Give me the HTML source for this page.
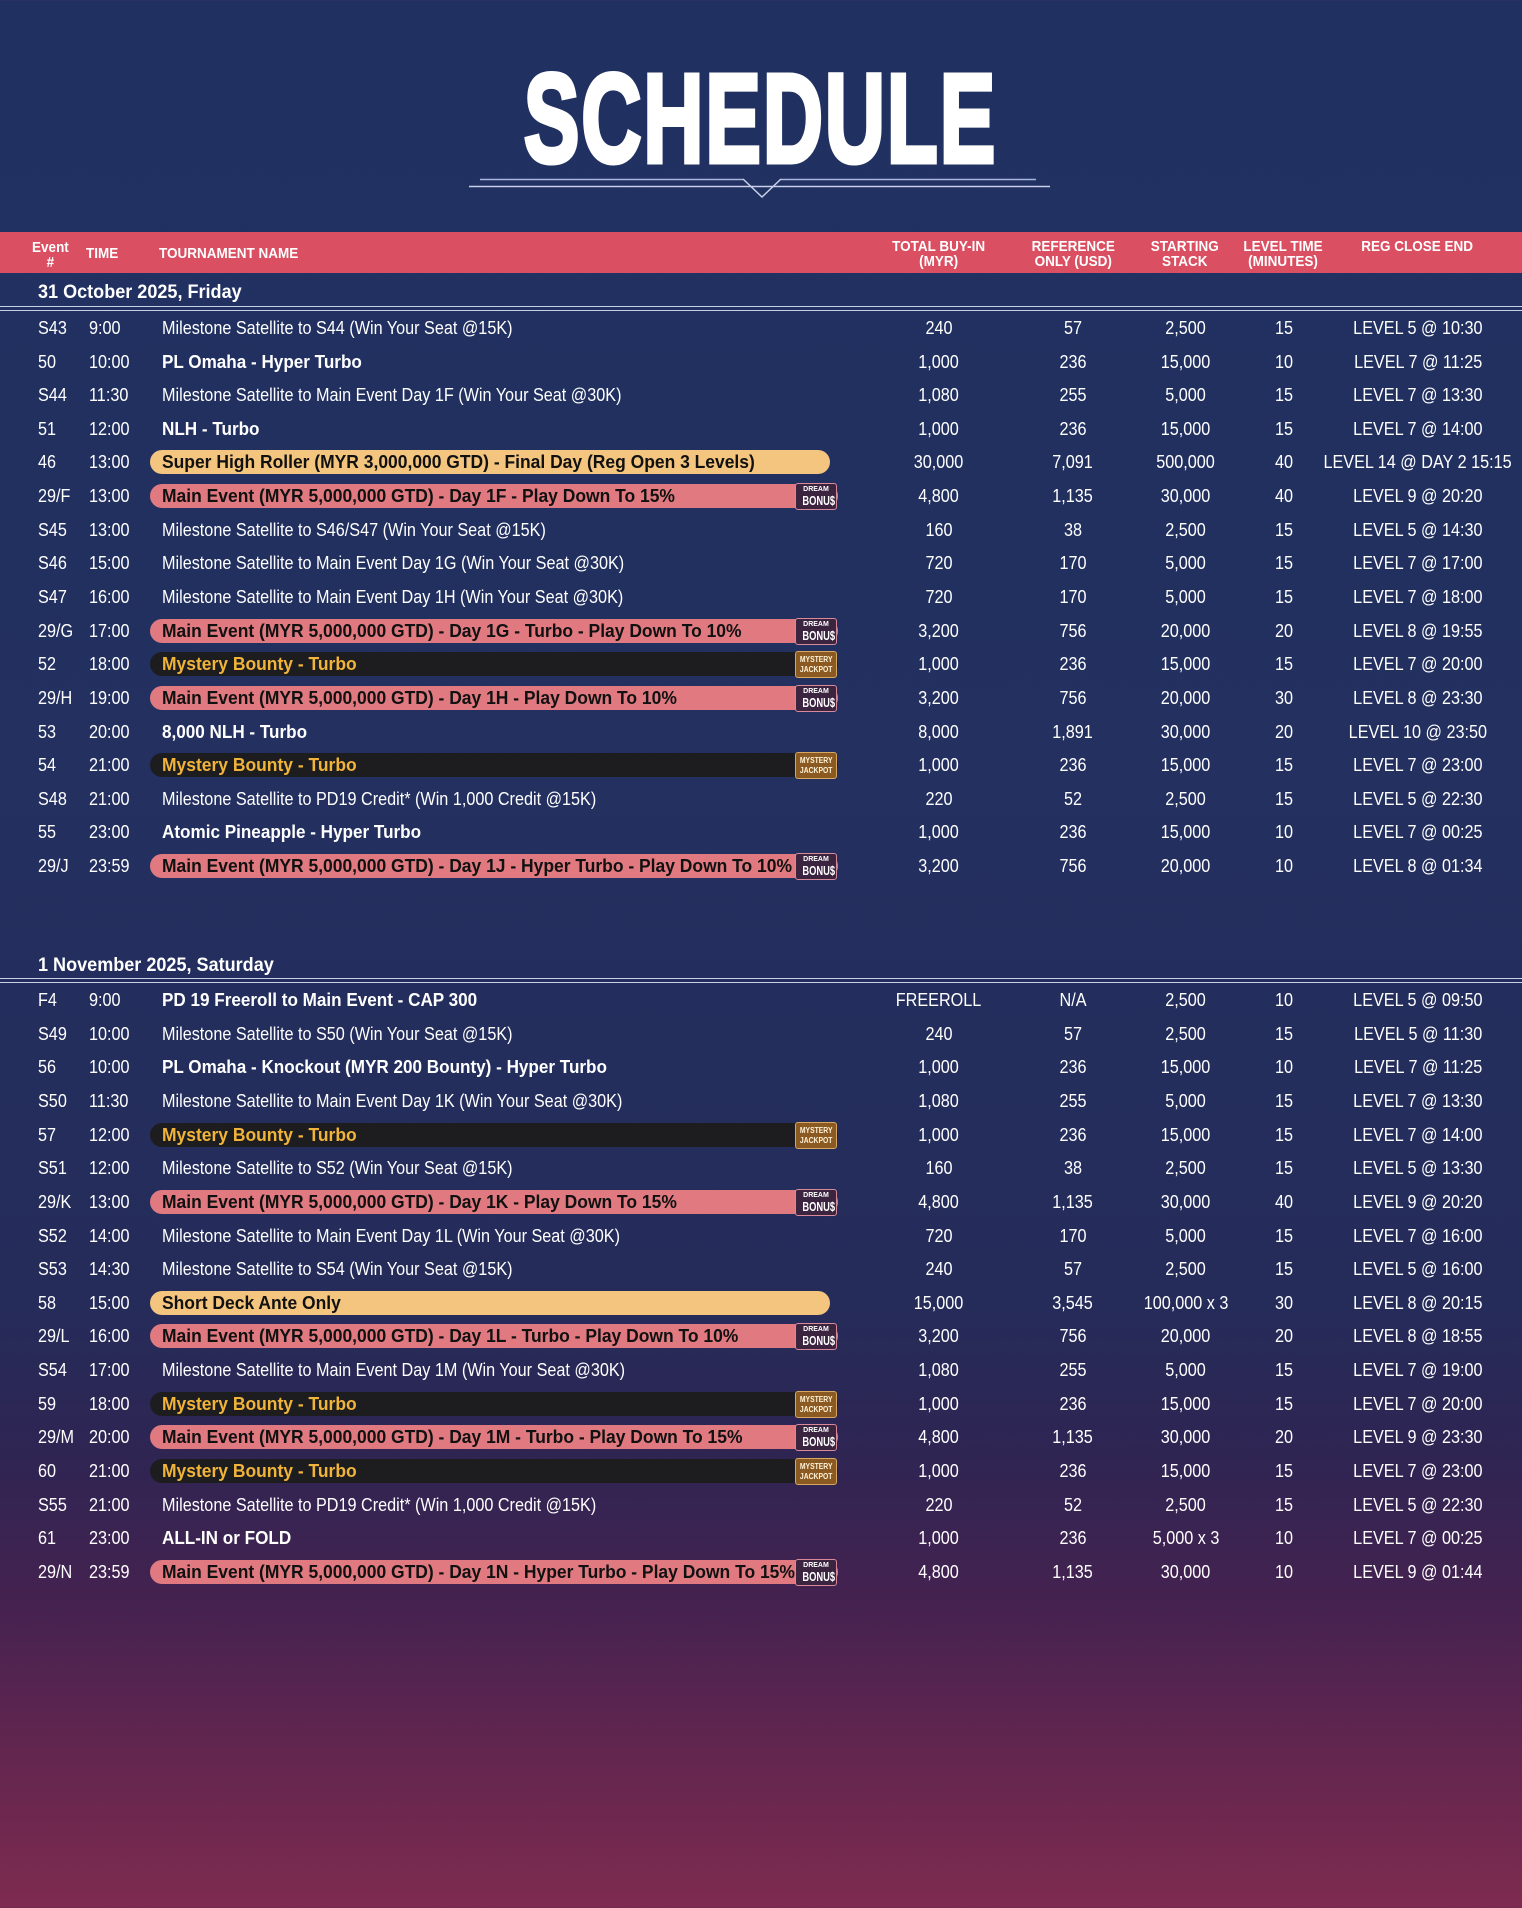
<!DOCTYPE html>
<html><head><meta charset="utf-8"><style>
*{margin:0;padding:0;box-sizing:border-box}
body{width:1522px;height:1908px;position:relative;overflow:hidden;font-family:"Liberation Sans",sans-serif;color:#fff;
background:linear-gradient(180deg,#203161 0%,#233060 40%,#252c5a 68%,#2e2553 76%,#452250 84%,#63264f 92%,#7e2b4f 100%)}
.title{position:absolute;left:0;width:1522px;top:44px;text-align:center;font-size:126px;font-weight:bold;line-height:150px}
.title span{display:inline-block;transform:scaleX(.66);letter-spacing:3px;-webkit-text-stroke:5px #fff}
.hb{position:absolute;left:0;top:232px;width:1522px;height:41px;background:#da4f61}
.h{position:absolute;font-weight:bold;font-size:15px;line-height:15px;text-align:center}
.h span{display:inline-block;transform:scaleX(.9)}
.date{position:absolute;left:38px;font-weight:bold;font-size:19px}
.date span{display:inline-block;transform:scaleX(.95);transform-origin:left}
.ln{position:absolute;left:0;width:1522px;height:1px;background:#c9d0e6}
.r{position:absolute;left:0;width:1522px;height:34px;line-height:34px;font-size:18px}
.r div{position:absolute;top:0;white-space:nowrap}
.r span{display:inline-block;transform:scaleX(.9);transform-origin:left}
.e{left:38px}.tm{left:89px}.n{left:162px}
.c{width:240px;margin-left:-120px;text-align:center}
.r .c span{transform-origin:center}
.b{font-weight:bold}
.r .b span{transform:scaleX(.95)}
.r div.p{left:150px;top:5px;height:24px;border-radius:12px;width:680px}
.gold{background:#f4c57f}.pink{background:#e07a80}.dark{background:#1d1d20}
.tb{color:#111;font-weight:bold}.ty{color:#f1b43a;font-weight:bold}
.r .tb span,.r .ty span{transform:scaleX(.97)}
.r div.bd{left:795px;top:4px;width:42px;height:27px;border-radius:3px;text-align:center;font-weight:bold;overflow:hidden}
.r div.bd span{transform-origin:center}
.db{background:#3a2440;border:1.5px solid #d98a9a}
.db i{display:block;font-style:normal;font-size:7px;line-height:8px;margin-top:2px}
.db b{display:block;font-size:13px;line-height:13px}
.db b span{transform:scaleX(.72)!important}
.mj{background:#8a5a22;border:1.5px solid #d9a860;color:#fff3d8}
.mj i{display:block;font-style:normal;font-size:8px;line-height:10px;margin-top:3px}
.mj i span{transform:scaleX(.85)!important}
</style></head><body>
<div class="title"><span>SCHEDULE</span></div>
<svg style="position:absolute;left:0;top:0" width="1522" height="220">
<line x1="480" y1="179.5" x2="743" y2="179.5" stroke="#a9b6dc" stroke-width="1.5"/>
<line x1="781" y1="179.5" x2="1036" y2="179.5" stroke="#a9b6dc" stroke-width="1.5"/>
<line x1="469" y1="186.5" x2="1050" y2="186.5" stroke="#c8d0ea" stroke-width="1.5"/>
<polyline points="743,179 762,197 781,179" fill="none" stroke="#c8d0ea" stroke-width="1.5"/>
</svg>
<div class="hb"></div>
<div class="h" style="left:20px;width:60px;top:240px"><span>Event<br>#</span></div>
<div class="h" style="left:86px;top:246px"><span style="transform-origin:left">TIME</span></div>
<div class="h" style="left:159px;top:246px"><span style="transform-origin:left">TOURNAMENT NAME</span></div>
<div class="h" style="left:859px;width:160px;top:239px"><span>TOTAL BUY-IN<br>(MYR)</span></div>
<div class="h" style="left:993px;width:160px;top:239px"><span>REFERENCE<br>ONLY (USD)</span></div>
<div class="h" style="left:1125px;width:120px;top:239px"><span>STARTING<br>STACK</span></div>
<div class="h" style="left:1223px;width:120px;top:239px"><span>LEVEL TIME<br>(MINUTES)</span></div>
<div class="h" style="left:1337px;width:160px;top:239px"><span>REG CLOSE END</span></div>

<div class="date" style="top:282px"><span>31 October 2025, Friday</span></div>
<div class="ln" style="top:306px"></div><div class="ln" style="top:310px"></div>

<div class="r" style="top:311px"><div class="e"><span>S43</span></div><div class="tm"><span>9:00</span></div><div class="n"><span>Milestone Satellite to S44 (Win Your Seat @15K)</span></div><div class="c" style="left:939px"><span>240</span></div><div class="c" style="left:1073px"><span>57</span></div><div class="c" style="left:1186px"><span>2,500</span></div><div class="c" style="left:1284px"><span>15</span></div><div class="c" style="left:1418px"><span>LEVEL 5 @ 10:30</span></div></div>
<div class="r" style="top:345px"><div class="e"><span>50</span></div><div class="tm"><span>10:00</span></div><div class="n b"><span>PL Omaha - Hyper Turbo</span></div><div class="c" style="left:939px"><span>1,000</span></div><div class="c" style="left:1073px"><span>236</span></div><div class="c" style="left:1186px"><span>15,000</span></div><div class="c" style="left:1284px"><span>10</span></div><div class="c" style="left:1418px"><span>LEVEL 7 @ 11:25</span></div></div>
<div class="r" style="top:378px"><div class="e"><span>S44</span></div><div class="tm"><span>11:30</span></div><div class="n"><span>Milestone Satellite to Main Event Day 1F (Win Your Seat @30K)</span></div><div class="c" style="left:939px"><span>1,080</span></div><div class="c" style="left:1073px"><span>255</span></div><div class="c" style="left:1186px"><span>5,000</span></div><div class="c" style="left:1284px"><span>15</span></div><div class="c" style="left:1418px"><span>LEVEL 7 @ 13:30</span></div></div>
<div class="r" style="top:412px"><div class="e"><span>51</span></div><div class="tm"><span>12:00</span></div><div class="n b"><span>NLH - Turbo</span></div><div class="c" style="left:939px"><span>1,000</span></div><div class="c" style="left:1073px"><span>236</span></div><div class="c" style="left:1186px"><span>15,000</span></div><div class="c" style="left:1284px"><span>15</span></div><div class="c" style="left:1418px"><span>LEVEL 7 @ 14:00</span></div></div>
<div class="r" style="top:445px"><div class="p gold"></div><div class="e"><span>46</span></div><div class="tm"><span>13:00</span></div><div class="n tb"><span>Super High Roller (MYR 3,000,000 GTD) - Final Day (Reg Open 3 Levels)</span></div><div class="c" style="left:939px"><span>30,000</span></div><div class="c" style="left:1073px"><span>7,091</span></div><div class="c" style="left:1186px"><span>500,000</span></div><div class="c" style="left:1284px"><span>40</span></div><div class="c" style="left:1418px"><span>LEVEL 14 @ DAY 2 15:15</span></div></div>
<div class="r" style="top:479px"><div class="p pink" style="width:688px"></div><div class="e"><span>29/F</span></div><div class="tm"><span>13:00</span></div><div class="n tb"><span>Main Event (MYR 5,000,000 GTD) - Day 1F - Play Down To 15%</span></div><div class="bd db"><i>DREAM</i><b><span>BONU$</span></b></div><div class="c" style="left:939px"><span>4,800</span></div><div class="c" style="left:1073px"><span>1,135</span></div><div class="c" style="left:1186px"><span>30,000</span></div><div class="c" style="left:1284px"><span>40</span></div><div class="c" style="left:1418px"><span>LEVEL 9 @ 20:20</span></div></div>
<div class="r" style="top:513px"><div class="e"><span>S45</span></div><div class="tm"><span>13:00</span></div><div class="n"><span>Milestone Satellite to S46/S47 (Win Your Seat @15K)</span></div><div class="c" style="left:939px"><span>160</span></div><div class="c" style="left:1073px"><span>38</span></div><div class="c" style="left:1186px"><span>2,500</span></div><div class="c" style="left:1284px"><span>15</span></div><div class="c" style="left:1418px"><span>LEVEL 5 @ 14:30</span></div></div>
<div class="r" style="top:546px"><div class="e"><span>S46</span></div><div class="tm"><span>15:00</span></div><div class="n"><span>Milestone Satellite to Main Event Day 1G (Win Your Seat @30K)</span></div><div class="c" style="left:939px"><span>720</span></div><div class="c" style="left:1073px"><span>170</span></div><div class="c" style="left:1186px"><span>5,000</span></div><div class="c" style="left:1284px"><span>15</span></div><div class="c" style="left:1418px"><span>LEVEL 7 @ 17:00</span></div></div>
<div class="r" style="top:580px"><div class="e"><span>S47</span></div><div class="tm"><span>16:00</span></div><div class="n"><span>Milestone Satellite to Main Event Day 1H (Win Your Seat @30K)</span></div><div class="c" style="left:939px"><span>720</span></div><div class="c" style="left:1073px"><span>170</span></div><div class="c" style="left:1186px"><span>5,000</span></div><div class="c" style="left:1284px"><span>15</span></div><div class="c" style="left:1418px"><span>LEVEL 7 @ 18:00</span></div></div>
<div class="r" style="top:614px"><div class="p pink" style="width:688px"></div><div class="e"><span>29/G</span></div><div class="tm"><span>17:00</span></div><div class="n tb"><span>Main Event (MYR 5,000,000 GTD) - Day 1G - Turbo - Play Down To 10%</span></div><div class="bd db"><i>DREAM</i><b><span>BONU$</span></b></div><div class="c" style="left:939px"><span>3,200</span></div><div class="c" style="left:1073px"><span>756</span></div><div class="c" style="left:1186px"><span>20,000</span></div><div class="c" style="left:1284px"><span>20</span></div><div class="c" style="left:1418px"><span>LEVEL 8 @ 19:55</span></div></div>
<div class="r" style="top:647px"><div class="p dark" style="width:688px"></div><div class="e"><span>52</span></div><div class="tm"><span>18:00</span></div><div class="n ty"><span>Mystery Bounty - Turbo</span></div><div class="bd mj"><i><span>MYSTERY<br>JACKPOT</span></i></div><div class="c" style="left:939px"><span>1,000</span></div><div class="c" style="left:1073px"><span>236</span></div><div class="c" style="left:1186px"><span>15,000</span></div><div class="c" style="left:1284px"><span>15</span></div><div class="c" style="left:1418px"><span>LEVEL 7 @ 20:00</span></div></div>
<div class="r" style="top:681px"><div class="p pink" style="width:688px"></div><div class="e"><span>29/H</span></div><div class="tm"><span>19:00</span></div><div class="n tb"><span>Main Event (MYR 5,000,000 GTD) - Day 1H - Play Down To 10%</span></div><div class="bd db"><i>DREAM</i><b><span>BONU$</span></b></div><div class="c" style="left:939px"><span>3,200</span></div><div class="c" style="left:1073px"><span>756</span></div><div class="c" style="left:1186px"><span>20,000</span></div><div class="c" style="left:1284px"><span>30</span></div><div class="c" style="left:1418px"><span>LEVEL 8 @ 23:30</span></div></div>
<div class="r" style="top:715px"><div class="e"><span>53</span></div><div class="tm"><span>20:00</span></div><div class="n b"><span>8,000 NLH - Turbo</span></div><div class="c" style="left:939px"><span>8,000</span></div><div class="c" style="left:1073px"><span>1,891</span></div><div class="c" style="left:1186px"><span>30,000</span></div><div class="c" style="left:1284px"><span>20</span></div><div class="c" style="left:1418px"><span>LEVEL 10 @ 23:50</span></div></div>
<div class="r" style="top:748px"><div class="p dark" style="width:688px"></div><div class="e"><span>54</span></div><div class="tm"><span>21:00</span></div><div class="n ty"><span>Mystery Bounty - Turbo</span></div><div class="bd mj"><i><span>MYSTERY<br>JACKPOT</span></i></div><div class="c" style="left:939px"><span>1,000</span></div><div class="c" style="left:1073px"><span>236</span></div><div class="c" style="left:1186px"><span>15,000</span></div><div class="c" style="left:1284px"><span>15</span></div><div class="c" style="left:1418px"><span>LEVEL 7 @ 23:00</span></div></div>
<div class="r" style="top:782px"><div class="e"><span>S48</span></div><div class="tm"><span>21:00</span></div><div class="n"><span>Milestone Satellite to PD19 Credit* (Win 1,000 Credit @15K)</span></div><div class="c" style="left:939px"><span>220</span></div><div class="c" style="left:1073px"><span>52</span></div><div class="c" style="left:1186px"><span>2,500</span></div><div class="c" style="left:1284px"><span>15</span></div><div class="c" style="left:1418px"><span>LEVEL 5 @ 22:30</span></div></div>
<div class="r" style="top:815px"><div class="e"><span>55</span></div><div class="tm"><span>23:00</span></div><div class="n b"><span>Atomic Pineapple - Hyper Turbo</span></div><div class="c" style="left:939px"><span>1,000</span></div><div class="c" style="left:1073px"><span>236</span></div><div class="c" style="left:1186px"><span>15,000</span></div><div class="c" style="left:1284px"><span>10</span></div><div class="c" style="left:1418px"><span>LEVEL 7 @ 00:25</span></div></div>
<div class="r" style="top:849px"><div class="p pink" style="width:688px"></div><div class="e"><span>29/J</span></div><div class="tm"><span>23:59</span></div><div class="n tb"><span>Main Event (MYR 5,000,000 GTD) - Day 1J - Hyper Turbo - Play Down To 10%</span></div><div class="bd db"><i>DREAM</i><b><span>BONU$</span></b></div><div class="c" style="left:939px"><span>3,200</span></div><div class="c" style="left:1073px"><span>756</span></div><div class="c" style="left:1186px"><span>20,000</span></div><div class="c" style="left:1284px"><span>10</span></div><div class="c" style="left:1418px"><span>LEVEL 8 @ 01:34</span></div></div>

<div class="date" style="top:955px"><span>1 November 2025, Saturday</span></div>
<div class="ln" style="top:978px"></div><div class="ln" style="top:982px"></div>

<div class="r" style="top:983px"><div class="e"><span>F4</span></div><div class="tm"><span>9:00</span></div><div class="n b"><span>PD 19 Freeroll to Main Event - CAP 300</span></div><div class="c" style="left:939px"><span>FREEROLL</span></div><div class="c" style="left:1073px"><span>N/A</span></div><div class="c" style="left:1186px"><span>2,500</span></div><div class="c" style="left:1284px"><span>10</span></div><div class="c" style="left:1418px"><span>LEVEL 5 @ 09:50</span></div></div>
<div class="r" style="top:1017px"><div class="e"><span>S49</span></div><div class="tm"><span>10:00</span></div><div class="n"><span>Milestone Satellite to S50 (Win Your Seat @15K)</span></div><div class="c" style="left:939px"><span>240</span></div><div class="c" style="left:1073px"><span>57</span></div><div class="c" style="left:1186px"><span>2,500</span></div><div class="c" style="left:1284px"><span>15</span></div><div class="c" style="left:1418px"><span>LEVEL 5 @ 11:30</span></div></div>
<div class="r" style="top:1050px"><div class="e"><span>56</span></div><div class="tm"><span>10:00</span></div><div class="n b"><span>PL Omaha - Knockout (MYR 200 Bounty) - Hyper Turbo</span></div><div class="c" style="left:939px"><span>1,000</span></div><div class="c" style="left:1073px"><span>236</span></div><div class="c" style="left:1186px"><span>15,000</span></div><div class="c" style="left:1284px"><span>10</span></div><div class="c" style="left:1418px"><span>LEVEL 7 @ 11:25</span></div></div>
<div class="r" style="top:1084px"><div class="e"><span>S50</span></div><div class="tm"><span>11:30</span></div><div class="n"><span>Milestone Satellite to Main Event Day 1K (Win Your Seat @30K)</span></div><div class="c" style="left:939px"><span>1,080</span></div><div class="c" style="left:1073px"><span>255</span></div><div class="c" style="left:1186px"><span>5,000</span></div><div class="c" style="left:1284px"><span>15</span></div><div class="c" style="left:1418px"><span>LEVEL 7 @ 13:30</span></div></div>
<div class="r" style="top:1118px"><div class="p dark" style="width:688px"></div><div class="e"><span>57</span></div><div class="tm"><span>12:00</span></div><div class="n ty"><span>Mystery Bounty - Turbo</span></div><div class="bd mj"><i><span>MYSTERY<br>JACKPOT</span></i></div><div class="c" style="left:939px"><span>1,000</span></div><div class="c" style="left:1073px"><span>236</span></div><div class="c" style="left:1186px"><span>15,000</span></div><div class="c" style="left:1284px"><span>15</span></div><div class="c" style="left:1418px"><span>LEVEL 7 @ 14:00</span></div></div>
<div class="r" style="top:1151px"><div class="e"><span>S51</span></div><div class="tm"><span>12:00</span></div><div class="n"><span>Milestone Satellite to S52 (Win Your Seat @15K)</span></div><div class="c" style="left:939px"><span>160</span></div><div class="c" style="left:1073px"><span>38</span></div><div class="c" style="left:1186px"><span>2,500</span></div><div class="c" style="left:1284px"><span>15</span></div><div class="c" style="left:1418px"><span>LEVEL 5 @ 13:30</span></div></div>
<div class="r" style="top:1185px"><div class="p pink" style="width:688px"></div><div class="e"><span>29/K</span></div><div class="tm"><span>13:00</span></div><div class="n tb"><span>Main Event (MYR 5,000,000 GTD) - Day 1K - Play Down To 15%</span></div><div class="bd db"><i>DREAM</i><b><span>BONU$</span></b></div><div class="c" style="left:939px"><span>4,800</span></div><div class="c" style="left:1073px"><span>1,135</span></div><div class="c" style="left:1186px"><span>30,000</span></div><div class="c" style="left:1284px"><span>40</span></div><div class="c" style="left:1418px"><span>LEVEL 9 @ 20:20</span></div></div>
<div class="r" style="top:1219px"><div class="e"><span>S52</span></div><div class="tm"><span>14:00</span></div><div class="n"><span>Milestone Satellite to Main Event Day 1L (Win Your Seat @30K)</span></div><div class="c" style="left:939px"><span>720</span></div><div class="c" style="left:1073px"><span>170</span></div><div class="c" style="left:1186px"><span>5,000</span></div><div class="c" style="left:1284px"><span>15</span></div><div class="c" style="left:1418px"><span>LEVEL 7 @ 16:00</span></div></div>
<div class="r" style="top:1252px"><div class="e"><span>S53</span></div><div class="tm"><span>14:30</span></div><div class="n"><span>Milestone Satellite to S54 (Win Your Seat @15K)</span></div><div class="c" style="left:939px"><span>240</span></div><div class="c" style="left:1073px"><span>57</span></div><div class="c" style="left:1186px"><span>2,500</span></div><div class="c" style="left:1284px"><span>15</span></div><div class="c" style="left:1418px"><span>LEVEL 5 @ 16:00</span></div></div>
<div class="r" style="top:1286px"><div class="p gold"></div><div class="e"><span>58</span></div><div class="tm"><span>15:00</span></div><div class="n tb"><span>Short Deck Ante Only</span></div><div class="c" style="left:939px"><span>15,000</span></div><div class="c" style="left:1073px"><span>3,545</span></div><div class="c" style="left:1186px"><span>100,000 x 3</span></div><div class="c" style="left:1284px"><span>30</span></div><div class="c" style="left:1418px"><span>LEVEL 8 @ 20:15</span></div></div>
<div class="r" style="top:1319px"><div class="p pink" style="width:688px"></div><div class="e"><span>29/L</span></div><div class="tm"><span>16:00</span></div><div class="n tb"><span>Main Event (MYR 5,000,000 GTD) - Day 1L - Turbo - Play Down To 10%</span></div><div class="bd db"><i>DREAM</i><b><span>BONU$</span></b></div><div class="c" style="left:939px"><span>3,200</span></div><div class="c" style="left:1073px"><span>756</span></div><div class="c" style="left:1186px"><span>20,000</span></div><div class="c" style="left:1284px"><span>20</span></div><div class="c" style="left:1418px"><span>LEVEL 8 @ 18:55</span></div></div>
<div class="r" style="top:1353px"><div class="e"><span>S54</span></div><div class="tm"><span>17:00</span></div><div class="n"><span>Milestone Satellite to Main Event Day 1M (Win Your Seat @30K)</span></div><div class="c" style="left:939px"><span>1,080</span></div><div class="c" style="left:1073px"><span>255</span></div><div class="c" style="left:1186px"><span>5,000</span></div><div class="c" style="left:1284px"><span>15</span></div><div class="c" style="left:1418px"><span>LEVEL 7 @ 19:00</span></div></div>
<div class="r" style="top:1387px"><div class="p dark" style="width:688px"></div><div class="e"><span>59</span></div><div class="tm"><span>18:00</span></div><div class="n ty"><span>Mystery Bounty - Turbo</span></div><div class="bd mj"><i><span>MYSTERY<br>JACKPOT</span></i></div><div class="c" style="left:939px"><span>1,000</span></div><div class="c" style="left:1073px"><span>236</span></div><div class="c" style="left:1186px"><span>15,000</span></div><div class="c" style="left:1284px"><span>15</span></div><div class="c" style="left:1418px"><span>LEVEL 7 @ 20:00</span></div></div>
<div class="r" style="top:1420px"><div class="p pink" style="width:688px"></div><div class="e"><span>29/M</span></div><div class="tm"><span>20:00</span></div><div class="n tb"><span>Main Event (MYR 5,000,000 GTD) - Day 1M - Turbo - Play Down To 15%</span></div><div class="bd db"><i>DREAM</i><b><span>BONU$</span></b></div><div class="c" style="left:939px"><span>4,800</span></div><div class="c" style="left:1073px"><span>1,135</span></div><div class="c" style="left:1186px"><span>30,000</span></div><div class="c" style="left:1284px"><span>20</span></div><div class="c" style="left:1418px"><span>LEVEL 9 @ 23:30</span></div></div>
<div class="r" style="top:1454px"><div class="p dark" style="width:688px"></div><div class="e"><span>60</span></div><div class="tm"><span>21:00</span></div><div class="n ty"><span>Mystery Bounty - Turbo</span></div><div class="bd mj"><i><span>MYSTERY<br>JACKPOT</span></i></div><div class="c" style="left:939px"><span>1,000</span></div><div class="c" style="left:1073px"><span>236</span></div><div class="c" style="left:1186px"><span>15,000</span></div><div class="c" style="left:1284px"><span>15</span></div><div class="c" style="left:1418px"><span>LEVEL 7 @ 23:00</span></div></div>
<div class="r" style="top:1488px"><div class="e"><span>S55</span></div><div class="tm"><span>21:00</span></div><div class="n"><span>Milestone Satellite to PD19 Credit* (Win 1,000 Credit @15K)</span></div><div class="c" style="left:939px"><span>220</span></div><div class="c" style="left:1073px"><span>52</span></div><div class="c" style="left:1186px"><span>2,500</span></div><div class="c" style="left:1284px"><span>15</span></div><div class="c" style="left:1418px"><span>LEVEL 5 @ 22:30</span></div></div>
<div class="r" style="top:1521px"><div class="e"><span>61</span></div><div class="tm"><span>23:00</span></div><div class="n b"><span>ALL-IN or FOLD</span></div><div class="c" style="left:939px"><span>1,000</span></div><div class="c" style="left:1073px"><span>236</span></div><div class="c" style="left:1186px"><span>5,000 x 3</span></div><div class="c" style="left:1284px"><span>10</span></div><div class="c" style="left:1418px"><span>LEVEL 7 @ 00:25</span></div></div>
<div class="r" style="top:1555px"><div class="p pink" style="width:688px"></div><div class="e"><span>29/N</span></div><div class="tm"><span>23:59</span></div><div class="n tb"><span>Main Event (MYR 5,000,000 GTD) - Day 1N - Hyper Turbo - Play Down To 15%</span></div><div class="bd db"><i>DREAM</i><b><span>BONU$</span></b></div><div class="c" style="left:939px"><span>4,800</span></div><div class="c" style="left:1073px"><span>1,135</span></div><div class="c" style="left:1186px"><span>30,000</span></div><div class="c" style="left:1284px"><span>10</span></div><div class="c" style="left:1418px"><span>LEVEL 9 @ 01:44</span></div></div>
</body></html>
